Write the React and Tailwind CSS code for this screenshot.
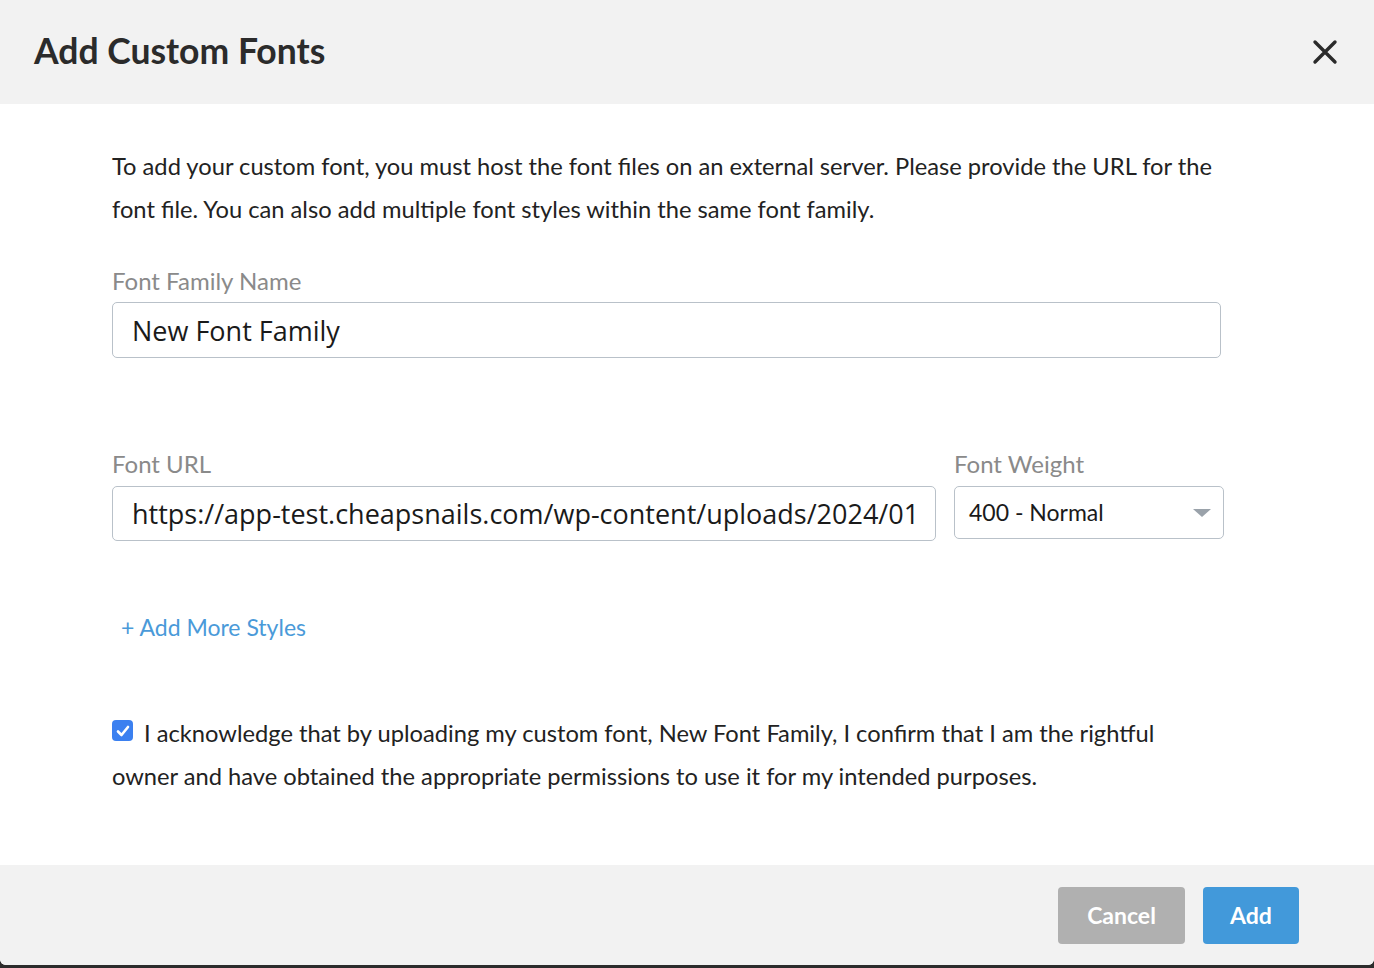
const Label = ({ children }) => (
  <p className="text-[24px] leading-[30px] text-[#8a8a8a]">{children}</p>
);

const App = () => {
  return (
    <div className="h-[968px] w-full bg-[#2c2c2c] font-['Lato',sans-serif]">
      <div className="flex h-[965px] flex-col overflow-hidden rounded-b-[6px] bg-white">
        <div className="flex h-[104px] shrink-0 items-center justify-between bg-[#f2f2f2] pl-[34px] pr-[36px]">
          <h1 className="pb-[2px] text-[35.5px] font-bold leading-none text-[#2b2b2b]">Add Custom Fonts</h1>
          <button className="text-[#2b2b2b]" aria-label="Close">
            <svg width="26" height="26" viewBox="0 0 26 26" fill="none" stroke="currentColor" strokeWidth="3.4" strokeLinecap="round">
              <path d="M3 3 L23 23 M23 3 L3 23" />
            </svg>
          </button>
        </div>

        <div className="flex-1 pl-[112px] pt-[41px]">
          <div className="w-[1112px]">
            <p className="text-[23.7px] leading-[43px] text-[#222]">
              To add your custom font, you must host the font files on an external server. Please provide the URL for the font file. You can also add multiple font styles within the same font family.
            </p>

            <div className="mt-[35px]">
              <Label>Font Family Name</Label>
              <input
                readOnly
                defaultValue="New Font Family"
                className="mt-[6px] block h-[56px] w-[1109px] rounded-[5px] border border-[#b9c1c9] px-[19px] font-['Open_Sans',sans-serif] text-[27px] text-[#1a1a1a] outline-none"
              />
            </div>

            <div className="mt-[91px] flex gap-[18px]">
              <div className="w-[824px]">
                <Label>Font URL</Label>
                <input
                  readOnly
                  defaultValue="https://app-test.cheapsnails.com/wp-content/uploads/2024/01/font-file.woff2"
                  className="mt-[7px] block h-[55px] w-full rounded-[5px] border border-[#b9c1c9] pl-[19px] pr-[18px] font-['Open_Sans',sans-serif] text-[27px] text-[#1a1a1a] outline-none"
                />
              </div>
              <div className="w-[270px]">
                <Label>Font Weight</Label>
                <div className="mt-[7px] flex h-[53px] items-center justify-between rounded-[5px] border border-[#b9c1c9] pl-[14px] pr-[11px]">
                  <span className="text-[23px] text-[#1a1a1a]">400 - Normal</span>
                  <svg width="20" height="10" viewBox="0 0 20 10">
                    <path d="M1 1 L19 1 L10 9 Z" fill="#9aa2aa" />
                  </svg>
                </div>
              </div>
            </div>

            <p className="mt-[71px] pl-[9px] text-[23px] leading-[30px] text-[#4a9ad9]">+ Add More Styles</p>

            <p className="mt-[70px] w-[1075px] text-[23.7px] leading-[43px] text-[#222]">
              <span className="mr-[11px] mt-[8px] inline-flex h-[21px] w-[21px] items-center justify-center rounded-[4px] bg-[#3b80f0] align-top">
                <svg width="14" height="12" viewBox="0 0 14 12" fill="none" stroke="white" strokeWidth="2.6" strokeLinecap="round" strokeLinejoin="round">
                  <path d="M2 6.5 L5.5 10 L12 2" />
                </svg>
              </span>
              I acknowledge that by uploading my custom font, New Font Family, I confirm that I am the rightful owner and have obtained the appropriate permissions to use it for my intended purposes.
            </p>
          </div>
        </div>

        <div className="flex h-[100px] shrink-0 items-center justify-end gap-[18px] bg-[#f2f2f2] pr-[75px]">
          <button className="h-[57px] w-[127px] rounded-[4px] bg-[#b0b0b0] text-[23px] font-bold text-white">Cancel</button>
          <button className="h-[57px] w-[96px] rounded-[4px] bg-[#4299da] text-[23px] font-bold text-white">Add</button>
        </div>
      </div>
    </div>
  );
};

export default App;
